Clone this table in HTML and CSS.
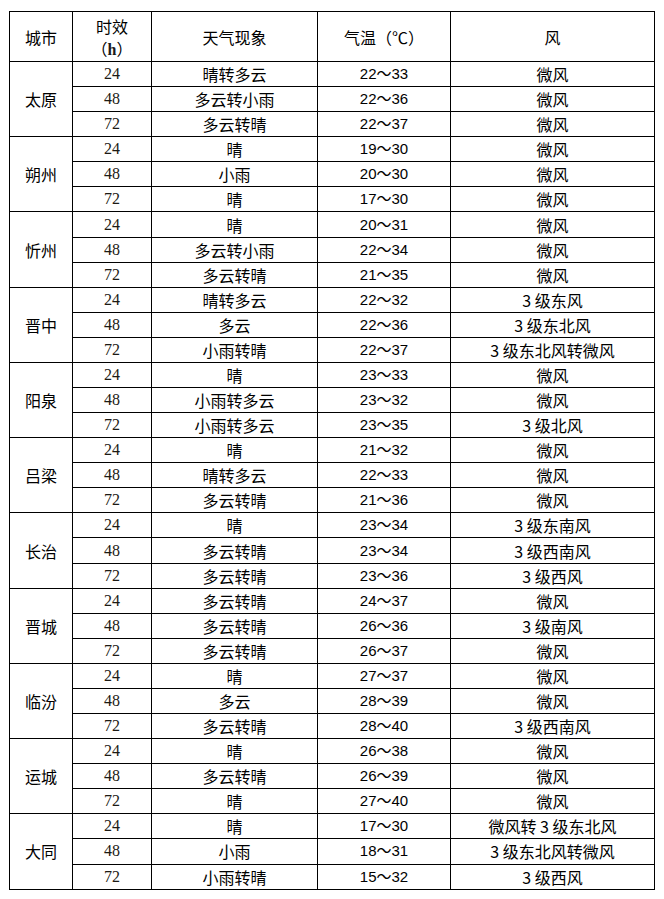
FILE: index.html
```html
<!DOCTYPE html>
<html lang="zh-CN">
<head>
<meta charset="utf-8">
<title>山西城市天气预报</title>
<link rel="stylesheet" href="styles.css">
</head>
<body>
<table class="forecast">
  <colgroup>
    <col class="c-city"><col class="c-hour"><col class="c-wx"><col class="c-temp"><col class="c-wind">
  </colgroup>
  <thead>
    <tr class="head">
      <th>城市</th>
      <th class="two">时效<br><span class="paren">（<span class="h">h</span>）</span></th>
      <th>天气现象</th>
      <th>气温（℃）</th>
      <th>风</th>
    </tr>
  </thead>
  <tbody>
    <tr><td rowspan="3" class="city">太原</td><td class="hr">24</td><td>晴转多云</td><td class="t">22～33</td><td>微风</td></tr>
    <tr><td class="hr">48</td><td>多云转小雨</td><td class="t">22～36</td><td>微风</td></tr>
    <tr><td class="hr">72</td><td>多云转晴</td><td class="t">22～37</td><td>微风</td></tr>

    <tr><td rowspan="3" class="city">朔州</td><td class="hr">24</td><td>晴</td><td class="t">19～30</td><td>微风</td></tr>
    <tr><td class="hr">48</td><td>小雨</td><td class="t">20～30</td><td>微风</td></tr>
    <tr><td class="hr">72</td><td>晴</td><td class="t">17～30</td><td>微风</td></tr>

    <tr><td rowspan="3" class="city">忻州</td><td class="hr">24</td><td>晴</td><td class="t">20～31</td><td>微风</td></tr>
    <tr><td class="hr">48</td><td>多云转小雨</td><td class="t">22～34</td><td>微风</td></tr>
    <tr><td class="hr">72</td><td>多云转晴</td><td class="t">21～35</td><td>微风</td></tr>

    <tr><td rowspan="3" class="city">晋中</td><td class="hr">24</td><td>晴转多云</td><td class="t">22～32</td><td>3 级东风</td></tr>
    <tr><td class="hr">48</td><td>多云</td><td class="t">22～36</td><td>3 级东北风</td></tr>
    <tr><td class="hr">72</td><td>小雨转晴</td><td class="t">22～37</td><td>3 级东北风转微风</td></tr>

    <tr><td rowspan="3" class="city">阳泉</td><td class="hr">24</td><td>晴</td><td class="t">23～33</td><td>微风</td></tr>
    <tr><td class="hr">48</td><td>小雨转多云</td><td class="t">23～32</td><td>微风</td></tr>
    <tr><td class="hr">72</td><td>小雨转多云</td><td class="t">23～35</td><td>3 级北风</td></tr>

    <tr><td rowspan="3" class="city">吕梁</td><td class="hr">24</td><td>晴</td><td class="t">21～32</td><td>微风</td></tr>
    <tr><td class="hr">48</td><td>晴转多云</td><td class="t">22～33</td><td>微风</td></tr>
    <tr><td class="hr">72</td><td>多云转晴</td><td class="t">21～36</td><td>微风</td></tr>

    <tr><td rowspan="3" class="city">长治</td><td class="hr">24</td><td>晴</td><td class="t">23～34</td><td>3 级东南风</td></tr>
    <tr><td class="hr">48</td><td>多云转晴</td><td class="t">23～34</td><td>3 级西南风</td></tr>
    <tr><td class="hr">72</td><td>多云转晴</td><td class="t">23～36</td><td>3 级西风</td></tr>

    <tr><td rowspan="3" class="city">晋城</td><td class="hr">24</td><td>多云转晴</td><td class="t">24～37</td><td>微风</td></tr>
    <tr><td class="hr">48</td><td>多云转晴</td><td class="t">26～36</td><td>3 级南风</td></tr>
    <tr><td class="hr">72</td><td>多云转晴</td><td class="t">26～37</td><td>微风</td></tr>

    <tr><td rowspan="3" class="city">临汾</td><td class="hr">24</td><td>晴</td><td class="t">27～37</td><td>微风</td></tr>
    <tr><td class="hr">48</td><td>多云</td><td class="t">28～39</td><td>微风</td></tr>
    <tr><td class="hr">72</td><td>多云转晴</td><td class="t">28～40</td><td>3 级西南风</td></tr>

    <tr><td rowspan="3" class="city">运城</td><td class="hr">24</td><td>晴</td><td class="t">26～38</td><td>微风</td></tr>
    <tr><td class="hr">48</td><td>多云转晴</td><td class="t">26～39</td><td>微风</td></tr>
    <tr><td class="hr">72</td><td>晴</td><td class="t">27～40</td><td>微风</td></tr>

    <tr><td rowspan="3" class="city">大同</td><td class="hr">24</td><td>晴</td><td class="t">17～30</td><td>微风转 3 级东北风</td></tr>
    <tr><td class="hr">48</td><td>小雨</td><td class="t">18～31</td><td>3 级东北风转微风</td></tr>
    <tr><td class="hr">72</td><td>小雨转晴</td><td class="t">15～32</td><td>3 级西风</td></tr>
  </tbody>
</table>
</body>
</html>
```

FILE: styles.css
```css
html, body {
  margin: 0;
  padding: 0;
  background: #ffffff;
}

body {
  padding: 11px 0 0 9px;
}

.forecast {
  border-collapse: collapse;
  table-layout: fixed;
  width: 645px;
  font-family: "Noto Sans CJK SC", "Liberation Sans", sans-serif;
  font-size: 16px;
  color: #000;
  text-spacing-trim: space-all;
}

.c-city { width: 63px; }
.c-hour { width: 79px; }
.c-wx   { width: 166px; }
.c-temp { width: 133px; }
.c-wind { width: 204px; }

.forecast th,
.forecast td {
  border: 1px solid #000;
  padding: 0;
  text-align: center;
  vertical-align: middle;
  font-weight: normal;
  line-height: 18px;
  height: 24.09px;
  white-space: nowrap;
  overflow: hidden;
}

.forecast tr {
  height: 25.09px;
}

.forecast tr.head {
  height: 50px;
}

.forecast tr.head th {
  height: 49px;
}

.forecast th.two {
  line-height: 22px;
}

.paren {
  font-family: "Noto Sans CJK SC", sans-serif;
  text-spacing-trim: space-all;
}

.h {
  font-family: "Liberation Serif", serif;
  font-weight: bold;
  color: #1a1a1a;
  line-height: 1;
}

.forecast td.hr {
  font-family: "Liberation Serif", "Times New Roman", serif;
  font-size: 16px;
  color: #1c1a14;
}

.forecast td.t {
  font-family: "Liberation Sans", "Noto Sans CJK SC", sans-serif;
  font-size: 15px;
}
```
